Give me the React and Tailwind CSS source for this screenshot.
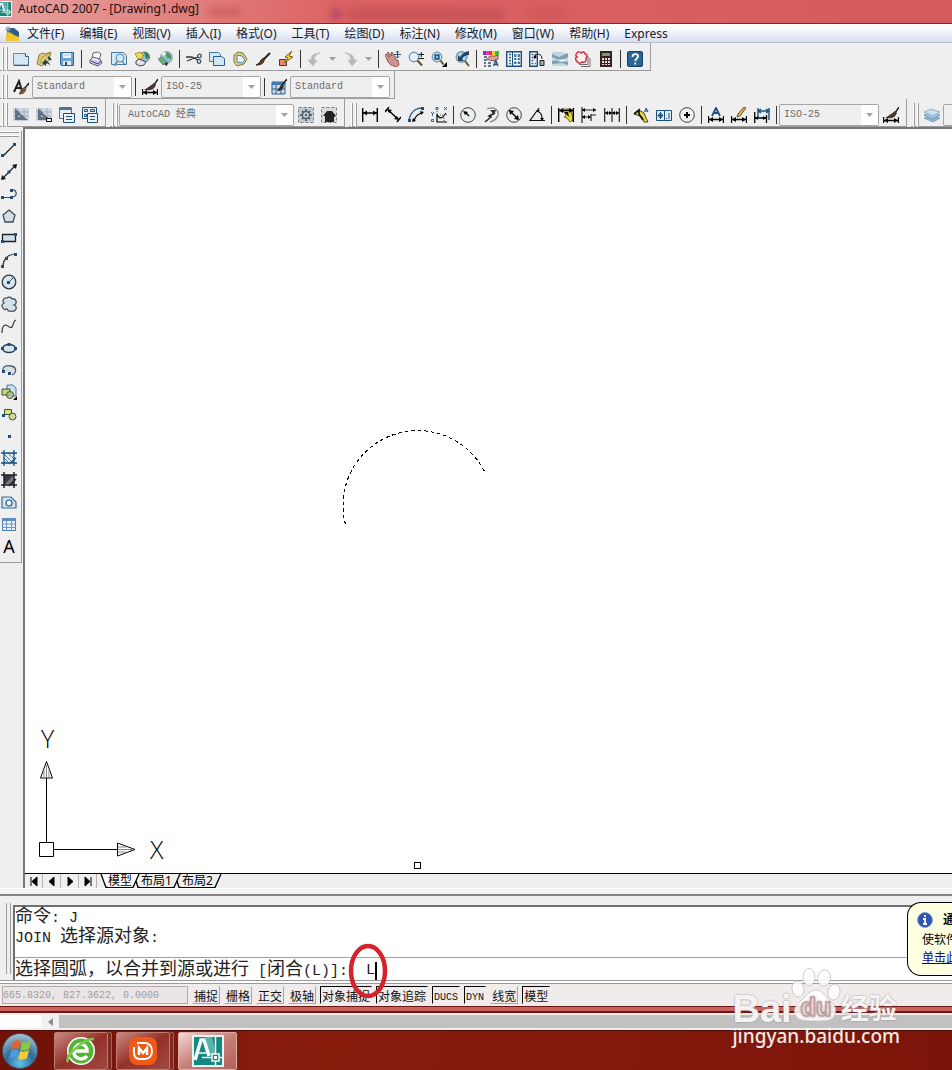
import React from "react";

const SANS = "font-['Noto_Sans','Noto_Sans_CJK_SC',sans-serif]";
const MONO = "font-['Liberation_Mono','Noto_Sans_CJK_SC',monospace]";

const NAVY = "#1d4f7c";
const PALE = "#d5e7f3";

// toolbar glyphs, all on a 16x16 grid
const GLYPHS = {
  new: (
    <>
      <path d="M.5 2.500h12l3 3v8.500H.5z" fill={PALE} stroke="#5f8cae" />
      <path d="M1 14.500h15V6" fill="none" stroke="#2b5d85" />
      <path d="M12.500 2.500v3h3" fill="#fff" stroke="#2b5d85" />
    </>
  ),
  open: (
    <>
      <path d="m1 13 2-9 3-2 3 1 6-2-2 8-7 6z" fill="#dcca7c" stroke="#8f7c33" />
      <path d="m4 13 2-7 9-4" fill="none" stroke="#b39d4c" />
      <path d="M14 15c0-3-2-5-4-5V8l-4 4 4 3v-2c2-1 3 0 4 2z" fill="#20404e" />
      <path d="m12 6 3 3" stroke="#20404e" strokeWidth="2" />
    </>
  ),
  save: (
    <>
      <path d="M1.500 1.500h13v13h-12l-1-1z" fill="#6fa3cf" stroke="#2f6593" />
      <path d="M4 2h8v5H4z" fill="#e9f3fa" />
      <path d="M5 4h6" stroke="#a9c4d8" />
      <path d="M4 10h8v4H4z" fill="#dfeaf2" />
      <path d="M6 11h2v3H6z" fill={NAVY} />
    </>
  ),
  print: (
    <>
      <path d="m4 8 1-6 5-1 3 2-2 6" fill="#fff" stroke="#666" />
      <path d="m2 9 3-3 7 2 2 4-4 3-8-3z" fill="#cfd2e6" stroke="#5b5b78" />
      <path d="m3 10 7 3 3-3" stroke="#3c3c58" fill="none" />
      <path d="m5 8 5 1" stroke="#fff" />
    </>
  ),
  preview: (
    <>
      <path d="M.5 1.500h12l3 3v9H.5z" fill={PALE} stroke="#4b7ba0" />
      <circle cx="9" cy="7" r="4" fill="#cfe8f5" stroke="#5c87a8" />
      <path d="m6.500 10-3 5" stroke="#7292aa" strokeWidth="2" />
      <path d="m11 10 3 4" stroke="#2b5d85" />
    </>
  ),
  publish: (
    <>
      <circle cx="10.500" cy="6" r="5" fill="#8dc1d6" stroke="#4b7c6b" />
      <path d="M10 1c4 0 5 3 5 6l-3 1z" fill="#3e7f4e" />
      <path d="m1 3 5-2 4 4-5 4z" fill="#f3d848" stroke="#8a6d1c" strokeDasharray="2 1" />
      <path d="m2 10 3-2 7 3-2 3-4 1-4-2z" fill="#e5e2ee" stroke="#4a4258" />
    </>
  ),
  web: (
    <>
      <circle cx="9.500" cy="6.500" r="6" fill="#8fc0d6" stroke="#8ba5ae" />
      <path d="M8 1c4 0 7 3 6 7l-4-1-1-3z" fill="#4f9a58" />
      <path d="M5 2c2-1 4-1 4 1L6 5z" fill="#fff" />
      <path d="m1 8 4-2 5 5-4 3z" fill="#68ab7c" stroke="#6f8f78" />
      <path d="m7 13 4-2-1 4z" fill="#222" />
    </>
  ),
  cut: (
    <>
      <path d="M0 6h6l6 3M1 10l5-2 6-2" stroke="#333" strokeWidth="1.300" fill="none" />
      <circle cx="13.500" cy="5" r="1.800" fill="none" stroke="#34516e" strokeWidth="1.300" />
      <circle cx="13" cy="10.500" r="1.800" fill="none" stroke="#34516e" strokeWidth="1.300" />
    </>
  ),
  copy: (
    <>
      <path d="M.5 1.500h9l2 2v7H.5z" fill={PALE} stroke="#3f79a0" />
      <path d="M4.500 5.500h8l3 2v7h-11z" fill="#cfe6f3" stroke="#2a618c" />
    </>
  ),
  paste: (
    <>
      <path d="m2 4 4-3 5 1 4 6-3 5-7 2-3-4z" fill="#d9cf91" stroke="#857638" />
      <path d="m5 4 5 1 3 4-3 3-5-1z" fill="#e7f3f8" stroke="#54809f" />
    </>
  ),
  brush: (
    <>
      <path d="m15 2-7 7" stroke="#222" strokeWidth="2" />
      <path d="M9 7 6 9c-1 3-3 4-5 5 4 0 7-1 8-4z" fill="#5f4330" stroke="#332218" />
    </>
  ),
  flash: (
    <>
      <path d="M1.500 8.500h7v6h-7z" fill="#f0856b" stroke="#3b3b3b" />
      <path d="m14 0-7 6 3 1-4 5 9-6-4-1z" fill="#f6d634" stroke="#7a5d0e" />
    </>
  ),
  undo: (
    <path d="M13 2C8 2 4 4 4 9H1l5 6 4-6H7c0-3 2-6 6-7z" fill="#b7b7b7" stroke="#c4c4c4" />
  ),
  redo: (
    <path d="M2 2c5 0 9 2 9 7h3l-5 6-4-6h3c0-3-2-6-6-7z" fill="#b7b7b7" stroke="#c4c4c4" />
  ),
  pan: (
    <>
      <path d="M1 6 0 4l1-1 4 3-3-4 1-1 4 4-1-3 1-1 3 5 1 3 2 0 1 5-3 2-5-2-3-3z" fill="#cf938b" stroke="#7a4747" strokeWidth=".8" />
      <path d="M12.500 0v7M9 3.500h7M11 1.500 12.500 0 14 1.500M11 5.500 12.500 7 14 5.500" stroke="#274b73" fill="none" />
    </>
  ),
  zoomRt: (
    <>
      <circle cx="6" cy="6" r="4.700" fill="#e3f2f8" stroke="#6f9bb8" strokeWidth="1.400" />
      <path d="m9.500 9.500 4.500 5" stroke="#6b4d2f" strokeWidth="2" />
      <path d="M10.500 3.500H16M13.300 1v5M10.500 7.500H16" stroke="#111" />
    </>
  ),
  zoomWin: (
    <>
      <circle cx="6" cy="6" r="4.700" fill="#e3f2f8" stroke="#6f9bb8" strokeWidth="1.400" />
      <path d="M4 4h4v4H4z" fill="#8cb8d4" stroke={NAVY} strokeWidth="1.400" />
      <path d="m9.500 9.500 3 4" stroke="#6b4d2f" strokeWidth="2" />
      <path d="M16 11v5h-5z" fill="#000" />
    </>
  ),
  zoomPrev: (
    <>
      <circle cx="7.500" cy="6" r="5.300" fill="#bcd6e6" stroke="#6f9bb8" strokeWidth="1.400" />
      <path d="M15 0C10 1 8 3 6 6L4 4v6h6L8 8c2-3 4-4 7-4z" fill="#27456b" />
      <path d="m11 10 4 5" stroke="#6b4d2f" strokeWidth="2" />
    </>
  ),
  props: (
    <>
      <path d="M0 0h3v4H0z" fill="#7b2fd0" />
      <path d="M3 0h3v4H3z" fill="#e53bc0" />
      <path d="M6 0h3v4H6z" fill="#e6342c" />
      <path d="M9 0h3v4H9z" fill="#f3d321" />
      <path d="M12 0h4v4h-4z" fill="#42b54a" />
      <path d="m4 8 3-3 5 0 3-1v4l-4 2-5-1z" fill="#dba596" stroke="#6d3a33" strokeWidth=".8" />
      <path d="M1 6h3M1 9h3M1 12h2M1 15h2M5 12h3M5 15h3" stroke="#3a4b68" strokeWidth="1.500" />
      <path d="m10.500 15 2.300-5.500L15 15M11 13.500h4" stroke={NAVY} fill="none" strokeWidth="1.300" />
    </>
  ),
  center: (
    <>
      <path d="M.7.7h14.600v14.600H.7z" fill="#f2f8fc" stroke={NAVY} strokeWidth="1.400" />
      <path d="M6.500 1v14" stroke={NAVY} />
      <path d="M3 3.500h2M3 6.500h2M3 9.500h2M3 12.500h2" stroke="#35648e" strokeWidth="1.500" />
      <path d="M8.500 3.500h1.500v2H8.500zM12 3.500h1.500v2H12zM8.500 7.500h1.500v1H8.500zM12 7.500h1.500v1H12zM8.500 11h1.500v1.500H8.500zM12 11h1.500v1.500H12z" fill="none" stroke="#35648e" />
    </>
  ),
  palettes: (
    <>
      <path d="M.7.7h7.600v14.600H.7z" fill="#f2f8fc" stroke={NAVY} strokeWidth="1.400" />
      <path d="M2.500 3.500h2M2.500 6.500h2M2.500 9.500h2M2.500 12.500h2M6 3.500h1M6 6.500h1M6 12.500h1" stroke="#35648e" strokeWidth="1.500" />
      <path d="M5 6c2-4 8-4 8 2" stroke="#222" fill="none" />
      <path d="m5 4 0 4 3-2z" />
      <path d="M11 9.500h4v5h-4z" fill="#8fb4cf" stroke="#222" />
    </>
  ),
  sheet: (
    <>
      <path d="M0 1h9l7 2v12H0z" fill="#c6d5de" />
      <path d="m0 3 7 3 9-4v4l-5 3 5 2v3l-6-2-10 1v-3l7-1-7-3z" fill="#7f9fb2" />
      <path d="m5 9 7-1 3 2-6 1z" fill="#e8eff3" />
    </>
  ),
  markup: (
    <>
      <path d="M13 5v8.500H4M15 7v8.500H6" stroke="#6d6d6d" fill="none" />
      <path d="M2 2c1-2 3-1 4 0 2-2 4-1 4 1 2 0 3 2 1 4 1 3-1 5-4 4-2 2-5 1-5-1-2-1-2-3 0-4-2-1-1-3 0-4z" fill="#fbeeee" stroke="#cf3145" strokeWidth="1.500" />
    </>
  ),
  calc: (
    <>
      <path d="M2 0h12v16H2z" fill="#3a2020" />
      <path d="M4 2h8v3H4z" fill="#63a56d" />
      <path d="M4 7h2v2H4zM7 7h2v2H7zM10 7h2v2h-2zM4 10h2v2H4zM7 10h2v2H7zM10 10h2v2h-2zM4 13h2v1H4zM7 13h2v1H7zM10 13h2v1h-2z" fill="#e8dede" />
    </>
  ),
  help: (
    <>
      <rect x=".5" y=".5" width="15" height="15" rx="1.500" fill="#2a6596" stroke="#174064" />
      <path d="M5.500 6c0-4 5.500-3.500 5.500-.5 0 2-2.700 2-2.700 4.500M8.300 11.500v2" stroke="#fff" strokeWidth="1.800" fill="none" />
    </>
  ),
  textStyle: (
    <>
      <path d="M1 13 6 2l3 10M3 9h5" stroke="#222" strokeWidth="2" fill="none" />
      <path d="m16 4-4 5" stroke="#222" strokeWidth="1.500" />
      <path d="m12 8-3 2-3 5c4 0 6-1 7-5z" fill="#7a5a3a" stroke="#3a2a1a" strokeWidth=".6" />
    </>
  ),
  dimStyle: (
    <>
      <path d="m16 0-4 6" stroke="#222" strokeWidth="1.500" />
      <path d="m12 4-4 3-6 4c6 1 10 0 12-5z" fill="#4a382c" />
      <path d="M.5 10v6M15.500 10v6M1 13.500h14" stroke="#000" strokeWidth="1.300" fill="none" />
      <path d="m1 13.500 4-2.500v5zM15 13.500 11 11v5z" />
    </>
  ),
  tableStyle: (
    <>
      <path d="M1 3h13v12H1z" fill="#c4daef" stroke="#2c5f94" />
      <path d="M1 3h13v3H1z" fill="#4679ad" />
      <path d="M1 10h13M5 6v9M10 6v9" stroke="#2c5f94" />
      <path d="m16 0-5 6" stroke="#222" strokeWidth="1.500" />
      <path d="m11 5-5 7c4 0 6-2 7-5z" fill="#3d2a1e" />
    </>
  ),
  grid: (
    <>
      <path d="M0 1h16v13H0z" fill="#cfd7de" />
      <path d="M5 1v13M11 1v13M0 5h16M0 9h16" stroke="#9fb0be" />
      <path d="M2 1v12h13L9 8 6 5zM5 8v2h3z" fill="#5d7084" fillRule="evenodd" />
    </>
  ),
  gridMin: (
    <>
      <path d="M0 1h16v13H0z" fill="#cfd7de" />
      <path d="M5 1v13M11 1v13M0 5h16M0 9h16" stroke="#9fb0be" />
      <path d="M2 1v12h13L9 8 6 5zM5 8v2h3z" fill="#5d7084" fillRule="evenodd" />
      <path d="M10.500 11.500h5v3h-5z" fill="#fff" stroke="#000" />
    </>
  ),
  windows: (
    <>
      <path d="M.5.5h12v11H.5z" fill="#e8eff4" stroke="#51738f" />
      <path d="M1 2h11" stroke="#51738f" strokeWidth="2" />
      <path d="M4.500 6.500h11v9h-11z" fill="#e9f3f9" stroke={NAVY} />
      <path d="M7 9.500h6M7 12.500h6" stroke={NAVY} />
    </>
  ),
  windowsAll: (
    <>
      <path d="M.5.5h14v11H.5z" fill="#e8eff4" stroke={NAVY} />
      <path d="M2.500 2.500h3v2h-3zM8.500 2.500h4v2h-4zM2.500 7.500h2v2h-2z" fill="none" stroke={NAVY} />
      <path d="M5.500 6.500h10v9h-10z" fill="#e9f3f9" stroke={NAVY} />
      <path d="M8 9.500h5M8 12.500h5" stroke={NAVY} />
    </>
  ),
  gear: (
    <>
      <path d="M.5.5h15v15H.5z" fill="#c4cbd0" stroke="#77828a" strokeDasharray="3 2" />
      <path d="M8 2v12M2 8h12M4 4l8 8M12 4l-8 8" stroke="#54636e" strokeWidth="1.800" />
      <circle cx="8" cy="8" r="3.500" fill="#c9d5dd" stroke="#54636e" strokeWidth="1.400" />
      <circle cx="8" cy="8" r="1.200" fill="#54636e" />
    </>
  ),
  workspace: (
    <>
      <path d="M.5.5h15v15H.5z" fill="#dadada" stroke="#77828a" strokeDasharray="3 2" />
      <path d="m2 9 4-5h5l4 5-2 1v5H4V9z" fill="#222" />
    </>
  ),
  linear: (
    <>
      <path d="M.7 1v14M15.300 1v14M1 6h14" stroke="#000" strokeWidth="1.400" fill="none" />
      <path d="m1 6 4-2.500v5zM15 6l-4-2.500v5z" />
    </>
  ),
  aligned: (
    <>
      <path d="m4 0-4 5M16 10l-4 5M3 3l10 9" stroke="#000" strokeWidth="1.500" />
      <path d="m2 2 5 1-3 3zM14 13l-5-1 3-3z" />
    </>
  ),
  arcLen: (
    <>
      <path d="M1 13C2 6 7 1 14 1" stroke="#35648e" fill="none" strokeWidth="1.300" />
      <path d="M6 14c1-4 3-7 8-8" stroke="#000" fill="none" strokeWidth="1.200" />
      <path d="m12 4 4 1-3 3zM4 15l1-4 3 3z" />
      <path d="M0 12h3v3H0zM13 0h3v3h-3z" fill={NAVY} />
    </>
  ),
  ordinate: (
    <>
      <path d="M6 7v8h10M6 8l3 3 3-1 3-4" stroke="#000" fill="none" strokeWidth="1.200" />
      <path d="m0 5 1.500 2L3 5M1.500 7v2M13 0l3 3M16 0l-3 3" stroke="#35648e" fill="none" />
      <path d="M5 .5h2v2H5zM.5 12.500h2v2h-2z" fill="none" stroke="#35648e" />
      <path d="M6 4v3M13 11v3M9 8h7" stroke="#555" strokeDasharray="1 1" />
    </>
  ),
  radius: (
    <>
      <circle cx="8" cy="8" r="7.300" fill="#eceff1" stroke="#444" />
      <path d="m9 9-4-4" stroke="#000" strokeWidth="1.500" />
      <path d="m3 4 5 1-3 3z" />
    </>
  ),
  jogged: (
    <>
      <path d="M4 2c7-3 12 1 11 6-1 4-4 6-8 7" stroke="#888" strokeWidth="1.300" fill="none" />
      <path d="m2 15 6-5-2-1 6-3" stroke="#222" strokeWidth="1.500" fill="none" />
      <path d="m13 3-6 0 4 5z" fill="#333" />
    </>
  ),
  diameter: (
    <>
      <circle cx="8" cy="8" r="7.300" fill="#eceff1" stroke="#444" />
      <path d="m4 4 8 8" stroke="#000" strokeWidth="1.500" />
      <path d="m3 3 5 1-4 4zM13 13l-5-1 4-4z" />
    </>
  ),
  angular: (
    <>
      <path d="M10 1 1 13.500h15M8 4c3 1 5 3 5 7" stroke="#111" fill="none" strokeWidth="1.200" />
      <path d="m13 14-2-3h4zM8 3h3l-2 2z" />
    </>
  ),
  quick: (
    <>
      <path d="m4 2 9 0 2 11-3 2-3-4-3-1 2-2z" fill="#e6d73c" stroke="#76691a" />
      <path d="M.7 1v14M15.300 1v14M1 3.500h14" stroke="#000" strokeWidth="1.400" fill="none" />
      <path d="m1 3.500 4-2.500v5zM15 3.500 11 1v5zM6 5l5 5-1-5z" />
    </>
  ),
  baseline: (
    <>
      <path d="M1 0v16M1 3h14M1 10h8M10 7v7M10 8h5" stroke="#222" fill="none" strokeWidth="1.200" />
      <path d="m1 3 3-2v4zM15 3l-3-2v4zM1 10l3-2v4zM10 10 7 8v4z" />
    </>
  ),
  continued: (
    <>
      <path d="M.7 1v14M8 1v14M15.300 1v14M1 6h14" stroke="#222" fill="none" strokeWidth="1.200" />
      <path d="m1 6 3-2v4zM8 6 5 4v4zM8 6l3-2v4zM15 6l-3-2v4z" />
    </>
  ),
  leader: (
    <>
      <path d="m1 7 5-4 5 3 2 5 2 4-4 0-2-5-2-1z" fill="#e3d83a" stroke="#4c4a18" />
      <path d="m1 7 5-4 0 4 4 6" stroke="#111" strokeWidth="1.700" fill="none" />
      <path d="m11.500 5 1.700-4L15 5M12 4h3" stroke={NAVY} fill="none" />
    </>
  ),
  tolerance: (
    <>
      <path d="M.5 3.500h15v10H.5zM8.500 3v11" fill="#dcebf5" stroke={NAVY} />
      <circle cx="4.500" cy="8.500" r="2" fill="none" stroke={NAVY} />
      <path d="M4.500 5v7M1.500 8.500H7M10 11.500h1M13 6v6" stroke={NAVY} />
    </>
  ),
  centerMark: (
    <>
      <circle cx="8" cy="8" r="7.300" fill="#f2f2f2" stroke="#444" />
      <path d="M8 5v6M5 8h6" stroke="#000" strokeWidth="2" />
    </>
  ),
  dimEdit: (
    <>
      <path d="m4 9 4-8 4 8M6 6h4" stroke={NAVY} strokeWidth="1.800" fill="none" />
      <path d="M.5 9v7M15.500 9v7M1 12.500h14" stroke="#000" strokeWidth="1.300" fill="none" />
      <path d="m1 12.500 4-2.500v5zM15 12.500 11 10v5z" />
    </>
  ),
  dimTextEdit: (
    <>
      <path d="m13 0 2 1-6 8-3 1 1-3z" fill="#d8b75a" stroke="#6d4f22" />
      <path d="M.5 9v7M15.500 9v7M1 12.500h14" stroke="#000" strokeWidth="1.300" fill="none" />
      <path d="m1 12.500 4-2.500v5zM15 12.500 11 10v5z" />
    </>
  ),
  dimUpdate: (
    <>
      <path d="M4 1v9M15 1v12M4 4h11M7 2 4 4l3 2M12 2l3 2-3 2" stroke={NAVY} strokeWidth="1.400" fill="none" />
      <path d="M.7 5v11M12.500 8v8M1 11h11" stroke="#000" strokeWidth="1.300" fill="none" />
      <path d="m1 11 3-2v4zM12 11 9 9v4z" />
    </>
  ),
  layers: (
    <>
      <path d="m0 11 7-3 9 3-7 4z" fill="#8fb4d0" stroke="#7fa4c0" />
      <path d="m0 8 7-3 9 3-7 4z" fill="#a9c8de" stroke="#6f9abb" />
      <path d="m0 5 7-3 9 3-7 4z" fill="#cadfed" stroke="#8fb1ca" />
    </>
  ),
  // draw toolbar
  line: (
    <>
      <path d="M2 14 14 2" stroke="#222" strokeWidth="1.300" />
      <path d="M0 12h3v3H0zM12 1h3v3h-3z" fill={NAVY} />
    </>
  ),
  xline: (
    <>
      <path d="M2 14 14 2" stroke="#222" strokeWidth="1.300" />
      <path d="m0 16 1-5 4 4zM16 0l-5 1 4 4z" fill="#111" />
      <path d="M6.500 6.500h3v3h-3z" fill={NAVY} />
    </>
  ),
  pline: (
    <>
      <path d="M1 11.500h9M10 4c6-1 7 6 2 7" stroke="#35516e" strokeWidth="1.200" fill="none" />
      <path d="M0 10h3v3H0zM9 10h3v3H9zM9 3h3v3H9z" fill={NAVY} />
    </>
  ),
  polygon: <path d="m8 2 6 5-2 7H4L2 7z" fill="#d3dce3" stroke="#3d4c58" strokeWidth="1.300" />,
  rect: (
    <>
      <path d="M1.500 4.500h13v7h-13z" fill="#cfe0ec" stroke="#222" strokeWidth="1.300" />
      <path d="M0 10h3v3H0zM13 3h3v3h-3z" fill={NAVY} />
    </>
  ),
  arc: (
    <>
      <path d="M2 14C2 8 7 2 14 2" stroke="#333" strokeWidth="1.200" fill="none" />
      <path d="M0 13h3v3H0zM4 5h3v3H4zM13 1h3v3h-3z" fill={NAVY} />
    </>
  ),
  circle: (
    <>
      <circle cx="8" cy="8" r="6.800" fill="#d9e6ef" stroke="#2c3a45" strokeWidth="1.300" />
      <path d="m8 8 4-4" stroke={NAVY} />
      <path d="M6 7h3v3H6z" fill={NAVY} />
    </>
  ),
  cloud: (
    <path d="M3 7a3 3 0 0 1 3-5 3 3 0 0 1 5 1 3 3 0 0 1 2 6 3 3 0 0 1-2 6 4 4 0 0 1-5-2 3 3 0 0 1-3-6z" fill="#d2e1ec" stroke="#46535d" strokeWidth="1.300" />
  ),
  spline: <path d="M1 15c0-5 1-8 4-8 3 1 4 4 6 2 2-3 1-6 4-7" stroke="#333" strokeWidth="1.200" fill="none" />,
  ellipse: (
    <>
      <ellipse cx="8" cy="8.500" rx="6.500" ry="4" fill="#d2e4f0" stroke="#2d4354" strokeWidth="1.300" />
      <path d="M0 7h3v3H0zM13 7h3v3h-3zM6.500 3h3v3h-3z" fill={NAVY} />
    </>
  ),
  ellArc: (
    <>
      <path d="M2 9C1 4 6 3 10 4c6 1 6 7 1 9L9 11z" fill="#d7dde2" />
      <path d="M2 9C1 4 6 3 10 4c6 1 6 7 1 9" fill="none" stroke="#4a5d6c" strokeWidth="1.300" />
      <path d="M1 8h3v3H1zM7 10h3v3H7z" fill={NAVY} />
    </>
  ),
  insert: (
    <>
      <path d="M6 1h6l3 3v8H6z" fill="#c9dfee" stroke="#517a9b" />
      <path d="M1 5h8v6H1z" fill="#c3d77e" stroke="#41532c" />
      <circle cx="9" cy="11" r="3.500" fill="#b3c884" fillOpacity=".8" stroke="#41532c" />
      <path d="M16 12v4h-4z" />
    </>
  ),
  block: (
    <>
      <path d="M3.500 3.500h7v5h-7z" fill="#d3e58a" stroke="#41532c" />
      <circle cx="11.500" cy="10.500" r="3.500" fill="#c3d694" fillOpacity=".8" stroke="#41532c" />
      <path d="M1 8h3v3H1z" fill={NAVY} />
    </>
  ),
  point: <path d="M7 7h3v3H7z" fill={NAVY} />,
  hatch: (
    <>
      <path d="M3 3h10v10H3z" fill="#dfeaf1" />
      <path d="m3 4 9 9M3 8l5 5M7 3l6 6M3 12l1 1M11 3l2 2" stroke="#4b7997" />
      <path d="M3 0v16M13 0v16M0 3h16M0 13h16M8 14l7-6" stroke={NAVY} strokeWidth="1.300" />
    </>
  ),
  gradient: (
    <>
      <path d="M3 3h10v10H3z" fill="#77797c" />
      <path d="M3 3h10L3 13z" fill="#3a3b48" />
      <path d="M3 0v16M13 0v16M0 3h16M0 13h16M8 14l7-7" stroke="#20202b" strokeWidth="1.500" />
    </>
  ),
  region: (
    <>
      <path d="M1 3h9l5 5v6H1z" fill="#cfe2ef" stroke="#3a6e96" strokeWidth="1.200" />
      <circle cx="8" cy="9" r="3" fill="#f2f7fa" stroke="#2b587c" strokeWidth="1.200" />
    </>
  ),
  table: (
    <>
      <path d="M1.500 2.500h13v12h-13z" fill="#eaf2fa" stroke="#4779ad" />
      <path d="M1 2h14v3H1z" fill="#5c8dc2" />
      <path d="M1 8h14M1 11.500h14M5.500 5v10M10.500 5v10" stroke="#6c96c4" />
    </>
  ),
};

function Glyph({ name }) {
  return (
    <svg width="16" height="16" viewBox="0 0 16 16" fill="#000" className="shrink-0" aria-hidden="true">
      {GLYPHS[name]}
    </svg>
  );
}

function ToolButton({ name }) {
  return (
    <button type="button" title={name} className="flex h-[22px] w-[23px] shrink-0 items-center justify-center">
      <Glyph name={name} />
    </button>
  );
}

function Sep() {
  return (
    <div className="flex w-[6px] shrink-0 justify-center">
      <div className="h-[18px] w-px bg-[#333]" />
    </div>
  );
}

function Caret() {
  return (
    <svg width="7" height="4" viewBox="0 0 7 4" fill="#a3a3a3" aria-hidden="true">
      <path d="M0 0h7L3.500 4z" />
    </svg>
  );
}

function DropCaret() {
  return (
    <button type="button" title="more" className="flex h-[22px] w-[13px] shrink-0 items-center justify-center">
      <Caret />
    </button>
  );
}

function Combo({ label, wide, children }) {
  return (
    <div className={`relative shrink-0 ${wide ? "w-[175px]" : "w-[100px]"}`}>
      <select
        aria-label={label}
        className={`${MONO} block h-[22px] w-full appearance-none rounded-[2px] border border-[#a5a5a5] bg-[#efefef] text-[10px] leading-[18px] text-[#6b6b6b] ${wide ? "pl-2" : "pl-1"}`}
      >
        {children}
      </select>
      <div className="pointer-events-none absolute inset-y-px right-px flex w-[17px] items-center justify-center bg-white">
        <Caret />
      </div>
    </div>
  );
}

function Grip() {
  return (
    <div className="mr-px flex h-6 w-[6px] shrink-0 justify-between">
      <div className="w-[2px] border-r border-[#9c9c9c] bg-white" />
      <div className="w-[2px] border-r border-[#9c9c9c] bg-white" />
    </div>
  );
}

// '|' is a separator, 'v' a small drop-down arrow
function Tools({ names }) {
  return names.split(" ").map((n, i) => {
    if (n === "|") return <Sep key={i} />;
    if (n === "v") return <DropCaret key={i} />;
    return <ToolButton key={i} name={n} />;
  });
}

function Toolbar({ children, last }) {
  return (
    <div className={`flex h-7 shrink-0 items-center border-b border-[#9c9c9c] pt-[5px] pl-[2px] ${last ? "" : "border-r pr-1"}`}>
      <Grip />
      {children}
    </div>
  );
}

const MENUS = [
  "文件(F)", "编辑(E)", "视图(V)", "插入(I)", "格式(O)", "工具(T)",
  "绘图(D)", "标注(N)", "修改(M)", "窗口(W)", "帮助(H)", "Express",
];

const DRAW_TOOLS = [
  "line", "xline", "pline", "polygon", "rect", "arc", "circle", "cloud", "spline",
  "ellipse", "ellArc", "insert", "block", "point", "hatch", "gradient", "region", "table",
];

const STATUS = [
  ["捕捉", false], ["栅格", false], ["正交", false], ["极轴", false], ["对象捕捉", true],
  ["对象追踪", true], ["DUCS", true], ["DYN", true], ["线宽", false], ["模型", true],
];

function AppIcon({ size }) {
  return (
    <svg width={size} height={size} viewBox="0 0 32 32" className="shrink-0" aria-hidden="true">
      <path d="M0 0h32v32H0z" fill="#e9f5f3" />
      <path d="M2 2h28v28H2z" fill="#16877f" />
      <path d="M13 2h7l4 18h-6z" fill="#5bb4ab" />
      <path d="m3 25 6-20h3l5 16" fill="none" stroke="#f4fbfa" strokeWidth="3.500" />
      <path d="M6 18h8M23.500 2v17M23.500 26v4M10 22.500h10M27 22.500h3M20 19h7v7h-7z" stroke="#f4fbfa" strokeWidth="1.500" fill="none" />
      <path d="M22 21h3v3h-3z" fill="#f4fbfa" />
    </svg>
  );
}

function TitleBar() {
  return (
    <header className="relative flex h-6 items-center gap-[6px] overflow-hidden border-b border-[#7c2a2c] bg-linear-to-r from-[#e5a09e] via-[#dc6363] via-35% to-[#d55a5c] pb-[5px]">
      <div className="absolute top-2 left-52 h-2 w-8 rounded-full bg-[#b94a4c]/50 blur-[3px]" />
      <div className="absolute top-2 left-[330px] h-3 w-3 rounded-full bg-[#9b3a6c]/60 blur-[3px]" />
      <div className="absolute top-2 left-[346px] h-3 w-40 rounded-full bg-[#b94a4c]/60 blur-[4px]" />
      <div className="absolute top-2 left-[526px] h-3 w-10 rounded-full bg-[#b94a4c]/30 blur-[4px]" />
      <div className="relative flex w-3 justify-end overflow-hidden">
        <AppIcon size={16} />
      </div>
      <h1 className="relative text-[12px] leading-[18px] text-[#1c0d0d]">AutoCAD 2007 - [Drawing1.dwg]</h1>
    </header>
  );
}

function MenuBar() {
  return (
    <nav className="flex h-[19px] items-center border-b border-[#b9bfcd] bg-linear-to-b from-white via-[#f3f5fb] via-40% to-[#d6def0] pt-[2px] pl-[5px]">
      <svg width="15" height="16" viewBox="0 0 15 16" className="mr-[7px]" aria-hidden="true">
        <path d="M2 2h7l5 4v8l-12-3z" fill="#2e5d84" />
        <path d="M1 7c3-2 6 0 8 2l5 2v4H1z" fill="#f0c531" />
        <path d="M3 0v6M0 3h6M1 1l4 4M5 1 1 5" stroke="#8da0ac" />
      </svg>
      <div className="flex gap-[15px]">
        {MENUS.map((m) => (
          <button key={m} type="button" className="text-[12px] leading-[18px] text-[#141a2c]">
            {m}
          </button>
        ))}
      </div>
    </nav>
  );
}

function Toolbars() {
  return (
    <div className="overflow-hidden">
      <div className="flex">
        <Toolbar>
          <Tools names="new open save | print preview publish web | cut copy paste brush flash | undo v redo v | pan zoomRt zoomWin zoomPrev | props center palettes sheet markup calc | help" />
        </Toolbar>
      </div>
      <div className="flex">
        <Toolbar>
          <ToolButton name="textStyle" />
          <Combo label="文字样式"><option>Standard</option></Combo>
          <Sep />
          <ToolButton name="dimStyle" />
          <Combo label="标注样式"><option>ISO-25</option></Combo>
          <Sep />
          <ToolButton name="tableStyle" />
          <Combo label="表格样式"><option>Standard</option></Combo>
        </Toolbar>
      </div>
      <div className="flex gap-[4px]">
        <Toolbar>
          <Tools names="grid gridMin windows windowsAll" />
        </Toolbar>
        <Toolbar>
          <Combo label="工作空间" wide><option>AutoCAD 经典</option></Combo>
          <Tools names="gear workspace" />
        </Toolbar>
        <Toolbar>
          <Tools names="linear aligned arcLen ordinate | radius jogged diameter angular | quick baseline continued | leader tolerance centerMark | dimEdit dimTextEdit dimUpdate |" />
          <Combo label="当前标注样式"><option>ISO-25</option></Combo>
          <ToolButton name="dimStyle" />
        </Toolbar>
        <Toolbar last>
          <ToolButton name="layers" />
          <Combo label="图层"><option /></Combo>
        </Toolbar>
      </div>
    </div>
  );
}

function DrawBar() {
  return (
    <aside className="w-[23px] shrink-0 pt-1">
      <div className="w-[22px] border-r border-b border-[#9c9c9c] pr-[2px] pb-[5px]">
        <div className="flex h-[6px] flex-col justify-between">
          <div className="h-[2px] border-b border-[#9c9c9c] bg-white" />
          <div className="h-[2px] border-b border-[#9c9c9c] bg-white" />
        </div>
        <div className="pt-[2px]">
          {DRAW_TOOLS.map((n) => (
            <button key={n} type="button" title={n} className="flex h-[22px] w-[18px] items-center justify-center">
              <Glyph name={n} />
            </button>
          ))}
          <button type="button" title="多行文字" className="flex h-[22px] w-[18px] items-center justify-center text-[18px] leading-[22px] text-black">
            A
          </button>
        </div>
      </div>
    </aside>
  );
}

function Canvas() {
  return (
    <div className="relative flex-1 overflow-hidden bg-white">
      <svg className="absolute top-[297px] left-[311px]" width="160" height="110" viewBox="0 0 160 110" fill="none">
        <path d="M9.500 98.500A74.800 74.800 0 0 1 148.500 45.500" stroke="#000" strokeDasharray="3.500 3" shapeRendering="crispEdges" />
      </svg>
      <svg className="absolute bottom-0 left-0" width="150" height="150" viewBox="0 0 150 150" fill="none" stroke="#000">
        <path d="M14.500 119.500h14v14h-14zM21.500 119.500v-65M28.500 126.500h64" />
        <path d="m21.500 38.500-6 16.500h12zM110 126.500 92.500 120v13z" />
        <path d="M21.500 42v13M24 47v8M19 47v8M93 126.500h14M93 124h8M93 129h8" stroke="#888" />
        <text x="16" y="25" fontSize="25" fontWeight="300" stroke="none" fill="#000" className="font-['Open_Sans',sans-serif]">Y</text>
        <text x="125" y="136" fontSize="25" fontWeight="300" stroke="none" fill="#000" className="font-['Open_Sans',sans-serif]">X</text>
      </svg>
      <div className="absolute bottom-1 left-[389px] h-[7px] w-[7px] border border-black" />
    </div>
  );
}

function TabEdge({ kind }) {
  return (
    <svg width="8" height="14" viewBox="0 0 8 14" fill="none" stroke="#000" strokeWidth="1.300" className="shrink-0" aria-hidden="true">
      {kind === "first" && <path d="M1 0h7v14H6z" fill="#fff" stroke="none" />}
      {kind === "first" && <path d="m1 0 5 13.500h2" />}
      {kind === "active" && <path d="M0 0h6L1 14H0z" fill="#fff" stroke="none" />}
      {kind !== "first" && <path d="M0 13.500h1L7 0" />}
      {(kind === "active" || kind === "mid") && <path d="m4 7 2 6.500h2" />}
    </svg>
  );
}

function LayoutTabs() {
  const arrows = ["M3 1v9M9 1v9L4 5.500z", "M8 1v9L3 5.500z", "M4 1v9l5-4.500z", "M3 1v9l5-4.500zM9 1v9"];
  return (
    <div className="flex h-[15px] border-t border-black text-[12px] leading-[13px] text-black">
      {arrows.map((d) => (
        <button key={d} type="button" title="布局" className="flex w-[18px] items-center justify-center border-r border-[#b5b5b5]">
          <svg width="12" height="11" viewBox="0 0 12 11" stroke="#000" strokeWidth="1" aria-hidden="true"><path d={d} /></svg>
        </button>
      ))}
      <div className="ml-[3px] flex">
        <TabEdge kind="first" />
        <button type="button" className="border-b border-black bg-white">模型</button>
        <TabEdge kind="active" />
        <button type="button" className="border-b border-black px-px">布局1</button>
        <TabEdge kind="mid" />
        <button type="button" className="border-b border-black px-px">布局2</button>
        <TabEdge kind="last" />
      </div>
    </div>
  );
}

function Cjk({ children }) {
  return <span className="text-[18px]">{children}</span>;
}

function CommandPanel() {
  return (
    <section className="relative border-t border-white bg-[#f4f4f4] pt-[5px]">
      <div className="flex border-t-2 border-[#858585] bg-[#efefef] pt-[9px]">
        <div className="mt-[-2px] mb-[6px] flex w-[13px] justify-end gap-[3px] pr-[2px]">
          <div className="w-px bg-[#9c9c9c]" />
          <div className="w-px bg-[#9c9c9c]" />
        </div>
        <div className={`${MONO} flex-1 border-t-2 border-l-2 border-[#6f6f6f] bg-white text-[15px] text-[#222]`}>
          <div className="h-[51px] border-b border-[#a0a0a0] leading-[20px] whitespace-pre">
            <p className="h-5"><Cjk>命令</Cjk>: J</p>
            <p className="h-5">JOIN <Cjk>选择源对象</Cjk>:</p>
          </div>
          <div className="flex h-[22px] items-center pt-1 leading-[18px]">
            <label htmlFor="cmd" className="whitespace-pre">
              <Cjk>选择圆弧，以合并到源或进行</Cjk> [<Cjk>闭合</Cjk>(L)]:{"  "}
            </label>
            <div className="relative flex flex-1 items-center">
              <input id="cmd" defaultValue="L" className="w-[9px] outline-none" />
              <div className="h-[18px] w-[2px] bg-black" />
              <svg className="absolute top-1/2 left-[-18px] z-10 -translate-y-1/2" width="40" height="56" viewBox="0 0 40 56" aria-hidden="true">
                <ellipse cx="20" cy="28" rx="17" ry="25" fill="none" stroke="#d6222a" strokeWidth="4.500" />
              </svg>
            </div>
          </div>
        </div>
      </div>
      <div className="h-1 border-y border-[#9a9a9a] bg-white" />
      <div className="absolute right-0 bottom-2 w-[45px] overflow-hidden rounded-l-[14px] border border-r-0 border-black bg-[#ffffe1] pt-[7px] pl-[9px]">
        <div className="flex h-5 items-center gap-[10px]">
          <svg width="16" height="16" viewBox="0 0 16 16" className="shrink-0" aria-hidden="true">
            <circle cx="8" cy="8" r="7.500" fill="#2c57b5" stroke="#8ea0c8" />
            <path d="M8 3v2M6 7h2v5M6 12h4" stroke="#fff" strokeWidth="1.800" fill="none" />
          </svg>
          <b className="text-[12px] leading-5 whitespace-nowrap">通</b>
        </div>
        <div className="pl-[5px] text-[12px] whitespace-nowrap">
          <p className="mt-px leading-[18px]">使软件</p>
          <a href="#" className="block pb-2 leading-[18px] text-[#0b0b8e] underline">单击此</a>
        </div>
      </div>
    </section>
  );
}

function StatusBar() {
  return (
    <div className="flex h-[22px] items-center bg-[#f0ecec] pl-[2px]">
      <output className={`${MONO} mr-1 h-[18px] w-[186px] border border-[#b3abab] bg-[#ebe5e5] text-[10px] leading-[18px] whitespace-pre text-[#a39c9c]`}>
        665.8320, 827.3622, 0.0000
      </output>
      <div className={`${MONO} flex gap-[4px] text-[12px] text-[#111]`}>
        {STATUS.map(([label, on]) => (
          <button
            key={label}
            type="button"
            aria-pressed={on}
            className={`h-[18px] border px-px pt-1 leading-[14px] whitespace-nowrap ${on ? "border-t-black border-r-transparent border-b-transparent border-l-black" : "border-t-transparent border-r-[#a8a4a4] border-b-[#a8a4a4] border-l-transparent"} ${/^D/.test(label) ? "text-[10px]" : ""}`}
          >
            {label}
          </button>
        ))}
      </div>
    </div>
  );
}

function Watermark() {
  return (
    <div className="pointer-events-none absolute right-[52px] bottom-[22px] z-20 flex flex-col items-start text-white/90 [text-shadow:0_0_2px_#8f8484]">
      <div className="flex items-end">
        <span className="font-['Liberation_Sans',sans-serif] text-[38px] leading-[34px] font-bold">Bai</span>
        <svg width="50" height="54" viewBox="0 0 50 54" className="mb-[4px] -ml-px" aria-hidden="true">
          <g fill="#fff" fillOpacity=".85" stroke="#c9bcbc" strokeWidth=".8">
            <ellipse cx="7" cy="21" rx="6" ry="8" transform="rotate(-10 7 21)" />
            <ellipse cx="18" cy="9" rx="6" ry="8.500" />
            <ellipse cx="33" cy="10" rx="6.500" ry="8" transform="rotate(8 33 10)" />
            <ellipse cx="43" cy="24" rx="6" ry="8" transform="rotate(12 43 24)" />
            <path d="M25 22c6 0 9 6 13 10 5 4 8 8 6 14-2 7-8 7-19 7S6 53 4 46c-2-6 2-10 7-14 4-4 8-10 14-10z" />
          </g>
          <text x="25" y="48" textAnchor="middle" fontSize="25" fontWeight="700" fill="#fff" stroke="#c79a98" strokeWidth="1.200" className="font-['Liberation_Sans',sans-serif]">du</text>
        </svg>
        <span className="text-[28px] leading-[36px] font-bold">经验</span>
      </div>
      <span className="-mt-[2px] text-[19px] leading-[24px] font-medium [text-shadow:none]">jingyan.baidu.com</span>
    </div>
  );
}

function TaskButton({ label, active, stacked, children }) {
  return (
    <div className="flex">
      <button
        type="button"
        title={label}
        className={`flex h-[38px] items-center justify-center rounded-[2px] border bg-linear-to-br ${active ? "w-[59px] border-[#dcb0aa] from-[#f1d9d6] via-[#c98078] to-[#b0615a]" : "w-[54px] border-[#bf7a72] from-[#c98a84] via-[#93302a] to-[#a04a42]"}`}
      >
        {children}
      </button>
      {stacked && <div className="h-[38px] w-1 rounded-r-[2px] border border-l-0 border-[#a8625a] bg-[#7c2a22]" />}
    </div>
  );
}

function Taskbar() {
  return (
    <footer className="flex h-10 items-center gap-[4px] border-t border-[#4b0b07] bg-linear-to-r from-[#6e1108] via-[#871c0d] via-30% to-[#7c1509] pl-px">
      <button type="button" title="开始" className="mr-[11px]">
        <svg width="38" height="38" viewBox="0 0 38 38" aria-hidden="true">
          <defs>
            <radialGradient id="orb" cx=".5" cy=".85" r=".8">
              <stop offset="0" stopColor="#5fc3e8" />
              <stop offset=".5" stopColor="#2f6b96" />
              <stop offset="1" stopColor="#9dbccc" />
            </radialGradient>
          </defs>
          <circle cx="19" cy="19" r="17.500" fill="url(#orb)" stroke="#3b4f63" />
          <path d="M12 10c3-2 5-2 8-1l-2 8c-3-1-5-1-8 1z" fill="#e9622c" />
          <path d="M21 10c3 1 5 1 9-1l-2 8c-3 2-6 2-9 1z" fill="#8fc640" />
          <path d="M10 19c3-2 5-2 8-1l-2 8c-3-1-5-1-8 1z" fill="#4b9be0" />
          <path d="M19 19c3 1 5 1 9-1l-2 8c-3 2-6 2-9 1z" fill="#f5c932" />
        </svg>
      </button>
      <TaskButton label="浏览器" stacked>
        <svg width="32" height="30" viewBox="0 0 32 30" fill="none" aria-hidden="true">
          <circle cx="16" cy="15" r="14" fill="#fff" />
          <circle cx="16" cy="15" r="12.500" fill="#55b436" />
          <path d="M10 15h12c0-9-12-9-13 0-1 8 9 10 13 5" stroke="#fff" strokeWidth="3.500" />
          <path d="M3 26C-1 20 20 2 29 3" stroke="#74cb4d" strokeWidth="2.500" />
        </svg>
      </TaskButton>
      <TaskButton label="遨游" stacked>
        <svg width="30" height="30" viewBox="0 0 30 30" fill="none" aria-hidden="true">
          <rect x="1" y="1" width="28" height="28" rx="8" fill="#ee5a17" />
          <path d="M9 7h8c4 0 7 3 7 8s-3 8-7 8h-5c-4 0-6-2-6-6v-6" stroke="#fff" strokeWidth="2" />
          <path d="M11 19v-7l4 5 4-5v7" stroke="#fff" strokeWidth="2.500" />
        </svg>
      </TaskButton>
      <TaskButton label="AutoCAD 2007" active>
        <AppIcon size={32} />
      </TaskButton>
    </footer>
  );
}

export default function App() {
  return (
    <div className={`${SANS} relative flex min-h-screen flex-col overflow-hidden bg-[#efefef]`}>
      <TitleBar />
      <MenuBar />
      <Toolbars />
      <main className="flex flex-1">
        <DrawBar />
        <div className="flex flex-1 flex-col border-t-2 border-l-2 border-[#777]">
          <Canvas />
          <LayoutTabs />
        </div>
      </main>
      <CommandPanel />
      <StatusBar />
      <div className="h-[7px] border-t border-b-2 border-[#6d1715] bg-[#c8635f]" />
      <div className="flex h-[17px] items-center border-y-2 border-[#f3eeee] bg-[#c1c1c1]">
        <div className="h-full w-[41px] bg-white" />
        <button type="button" title="向左滚动" className="flex h-full w-[18px] items-center justify-center bg-[#f1f1f1]">
          <svg width="5" height="8" viewBox="0 0 5 8" fill="#8c8c8c" aria-hidden="true"><path d="M5 0v8L0 4z" /></svg>
        </button>
      </div>
      <Taskbar />
      <Watermark />
    </div>
  );
}
